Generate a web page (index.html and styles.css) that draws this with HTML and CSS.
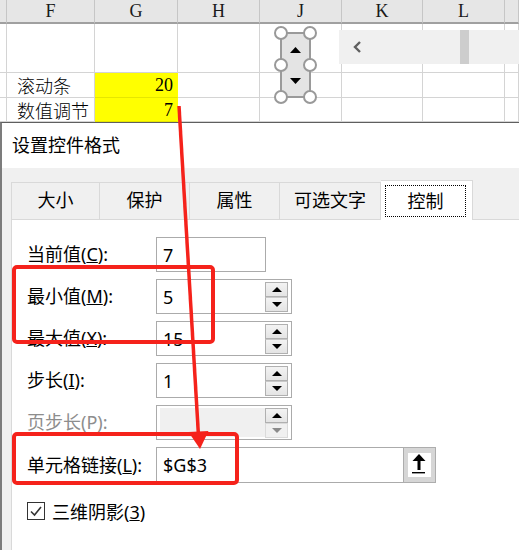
FILE: index.html
```html
<!DOCTYPE html>
<html lang="zh-CN">
<head>
  <meta charset="UTF-8">
  <meta name="viewport" content="width=device-width, initial-scale=1.0">
  <title>设置控件格式</title>
  <link rel="stylesheet" href="styles.css">
</head>
<body>
<div class="page">

  <!-- Worksheet -->
  <div class="sheet">
    <div class="hd"></div><div class="hd">F</div><div class="hd">G</div><div class="hd">H</div>
    <div class="hd">J</div><div class="hd">K</div><div class="hd">L</div><div class="hd"></div>

    <div class="cell tall"></div><div class="cell"></div><div class="cell"></div><div class="cell"></div>
    <div class="cell"></div><div class="cell"></div><div class="cell"></div><div class="cell"></div>

    <div class="cell"></div><div class="cell txt">滚动条</div><div class="cell num hl">20</div><div class="cell"></div>
    <div class="cell"></div><div class="cell"></div><div class="cell"></div><div class="cell"></div>

    <div class="cell"></div><div class="cell txt">数值调节</div><div class="cell num hl">7</div><div class="cell"></div>
    <div class="cell"></div><div class="cell"></div><div class="cell"></div><div class="cell"></div>
  </div>

  <!-- Form controls floating on the sheet -->
  <svg class="spin-ctl" width="45" height="80" viewBox="0 0 45 80">
    <rect x="8" y="8" width="29" height="64" fill="#e4e4e4" stroke="#9a9a9a" stroke-width="2"/>
    <polygon points="17,28 28,28 22.5,22" fill="#000"/>
    <polygon points="17,53 28,53 22.5,59" fill="#000"/>
    <g fill="#fff" stroke="#999" stroke-width="2">
      <circle cx="8" cy="8" r="6"/><circle cx="37" cy="8" r="6"/>
      <circle cx="8" cy="40" r="6"/><circle cx="37" cy="40" r="6"/>
      <circle cx="8" cy="72" r="6"/><circle cx="37" cy="72" r="6"/>
    </g>
  </svg>
  <div class="scrollbar">
    <svg class="chev" width="10" height="12" viewBox="0 0 10 12">
      <polyline points="8,1 3,6 8,11" fill="none" stroke="#606060" stroke-width="2.4"/>
    </svg>
    <div class="thumb"></div>
  </div>

  <!-- Dialog -->
  <div class="dialog">
    <div class="title">设置控件格式</div>
    <div class="dlg-body">
      <div class="tabs">
        <div class="tab w89">大小</div>
        <div class="tab w90">保护</div>
        <div class="tab w90">属性</div>
        <div class="tab w101">可选文字</div>
        <div class="tab active"><span class="focus">控制</span></div>
      </div>
      <div class="panel">
        <div class="form">
          <label>当前值(<u>C</u>):</label>
          <div class="field short"><span>7</span></div>

          <label>最小值(<u>M</u>):</label>
          <div class="field"><span>5</span>
            <div class="spin"><div class="up"></div><div class="down"></div></div>
          </div>

          <label>最大值(<u>X</u>):</label>
          <div class="field"><span>15</span>
            <div class="spin"><div class="up"></div><div class="down"></div></div>
          </div>

          <label>步长(<u>I</u>):</label>
          <div class="field"><span>1</span>
            <div class="spin"><div class="up"></div><div class="down"></div></div>
          </div>

          <label class="disabled">页步长(P):</label>
          <div class="field off"><span class="fill"></span>
            <div class="spin"><div class="up"></div><div class="down dim"></div></div>
          </div>

          <label>单元格链接(<u>L</u>):</label>
          <div class="field link"><span>$G$3</span>
            <div class="ref-btn">
              <div class="ref-icon">
                <svg width="22" height="24" viewBox="0 0 22 24">
                  <polygon points="11,1 17.5,8 4.5,8" fill="#000"/>
                  <rect x="9.5" y="7" width="3" height="10" fill="#000"/>
                  <rect x="4" y="19" width="13" height="1.4" fill="#000"/>
                </svg>
              </div>
            </div>
          </div>
        </div>

        <label class="check">
          <span class="box">
            <svg width="16" height="16" viewBox="0 0 16 16">
              <polyline points="3,8.5 6.5,12 13,4" fill="none" stroke="#333" stroke-width="1.6"/>
            </svg>
          </span>
          <span>三维阴影(<u>3</u>)</span>
        </label>
      </div>
    </div>
  </div>

  <!-- Red annotations -->
  <div class="mark m1"></div>
  <div class="mark m2"></div>
  <svg class="arrow" width="519" height="550" viewBox="0 0 519 550">
    <line x1="179" y1="106" x2="198.5" y2="436" stroke="#f5221b" stroke-width="3.5"/>
    <polygon points="188.5,432 208.5,431 200,449" fill="#f5221b"/>
  </svg>
</div>
</body>
</html>
```

FILE: styles.css
```css
* {
  box-sizing: border-box;
}
body {
  margin: 0;
  background-color: #fff;
  font-family: "Noto Sans", "Noto Sans CJK SC", sans-serif;
  color: #000;
}
.page {
  position: relative;
  width: 519px;
  height: 550px;
  overflow: hidden;
}

/* worksheet */
.sheet {
  display: grid;
  grid-template-columns: 7px 88px 83px 82px 82px 81px 82px 14px;
  grid-template-rows: 24px 49px 25px 24px;
}
.hd {
  background-color: #e6e6e6;
  border-right: 1px solid #c6c6c6;
  border-bottom: 2px solid #a0a0a0;
  font-family: "Liberation Serif", serif;
  font-size: 18px;
  line-height: 22px;
  text-align: center;
  color: #1a1a1a;
}
.cell {
  border-right: 1px solid #d4d4d4;
  border-bottom: 1px solid #d4d4d4;
  font-size: 18px;
  line-height: 24px;
  white-space: nowrap;
  overflow: hidden;
}
.cell.txt {
  padding-left: 10px;
  font-family: "Noto Sans CJK SC", serif;
  font-weight: 300;
}
.cell.num {
  text-align: right;
  padding-right: 4px;
  font-family: "Liberation Serif", serif;
}
.cell.hl {
  background-color: #ffff00;
  border-right-color: #ffff00;
  border-bottom-color: #e6e600;
}

.spin-ctl {
  position: absolute;
  left: 273px;
  top: 25px;
}
.scrollbar {
  position: absolute;
  left: 339px;
  top: 30px;
  width: 180px;
  height: 34px;
  background-color: #f0f0f0;
}
.chev {
  position: absolute;
  left: 13px;
  top: 11px;
}
.thumb {
  position: absolute;
  left: 121px;
  top: 0;
  width: 9px;
  height: 34px;
  background-color: #cdcdcd;
}

/* dialog */
.dialog {
  border-top: 1px solid #5f5f5f;
  border-left: 2px solid #7c7c7c;
  height: 428px;
  background-color: #f0f0f0;
}
.title {
  height: 45px;
  background-color: #fff;
  padding-left: 10px;
  font-size: 18px;
  line-height: 45px;
}
.dlg-body {
  padding: 14px 0 0 9px;
}
.tabs {
  display: flex;
  align-items: flex-end;
  height: 37px;
}
.tab {
  height: 37px;
  border-top: 1px solid #d9d9d9;
  border-right: 1px solid #d9d9d9;
  font-size: 18px;
  line-height: 35px;
  text-align: center;
}
.tab:first-child {
  border-left: 1px solid #d9d9d9;
}
.w89 { width: 89px; }
.w90 { width: 90px; }
.w101 { width: 101px; }
.tab.active {
  width: 92px;
  height: 40px;
  margin-bottom: -1px;
  position: relative;
  background-color: #fff;
  padding: 4px 6px 3px 4px;
  display: flex;
}
.focus {
  flex: 1;
  border: 1px dotted #000;
  line-height: 30px;
}
.panel {
  background-color: #fff;
  border-top: 1px solid #d9d9d9;
  border-left: 1px solid #d9d9d9;
  height: 340px;
  padding: 17px 0 0 15px;
}
.form {
  display: grid;
  grid-template-columns: 129px auto;
  row-gap: 7px;
  align-items: center;
  justify-items: start;
}
.form label {
  font-size: 18px;
  margin-top: -3px;
}
.form label.disabled {
  color: #8d8d8d;
}
.field {
  display: flex;
  align-items: center;
  width: 136px;
  height: 35px;
  border: 1px solid #ababab;
  padding-left: 6px;
  font-size: 18px;
}
.field.short {
  width: 110px;
}
.field.off {
  padding: 2px 0 2px 3px;
}
.field .fill {
  align-self: stretch;
  flex: 1;
  background-color: #f0f0f0;
}
.field.link {
  width: 280px;
  height: 36px;
}
.spin {
  margin-left: auto;
  margin-right: 3px;
  display: flex;
  flex-direction: column;
}
.spin div {
  position: relative;
  width: 23px;
  height: 15px;
  border: 1px solid #b0b0b0;
  background: linear-gradient(#f3f3f3, #e4e4e4);
}
.spin .down {
  border-top-color: #c8c8c8;
}
.spin div::before {
  content: "";
  position: absolute;
  left: 6px;
  width: 0;
  height: 0;
  border-left: 5px solid transparent;
  border-right: 5px solid transparent;
}
.spin .up::before {
  top: 4px;
  border-bottom: 5px solid #000;
}
.spin .down::before {
  top: 4px;
  border-top: 5px solid #000;
}
.spin .down.dim {
  background: #f0f0f0;
  border-color: #dadada;
}
.spin .down.dim::before {
  border-top-color: #8a8a8a;
}
.ref-btn {
  align-self: stretch;
  width: 33px;
  margin: -1px -1px -1px auto;
  border: 1px solid #adadad;
  background-color: #d6d6d6;
  padding: 5px 4px;
}
.ref-icon {
  background-color: #fff;
  height: 24px;
}
.ref-icon svg {
  display: block;
}
.check {
  display: flex;
  align-items: center;
  gap: 7px;
  margin-top: 15px;
  font-size: 18px;
}
.check .box {
  width: 18px;
  height: 18px;
  border: 1px solid #333;
  display: flex;
  align-items: center;
  justify-content: center;
}

/* annotations */
.mark {
  position: absolute;
  border: 4px solid #f5221b;
  border-radius: 5px;
}
.m1 {
  left: 12px;
  top: 265px;
  width: 203px;
  height: 79px;
}
.m2 {
  left: 12px;
  top: 432px;
  width: 227px;
  height: 53px;
}
.arrow {
  position: absolute;
  left: 0;
  top: 0;
  pointer-events: none;
}
```
